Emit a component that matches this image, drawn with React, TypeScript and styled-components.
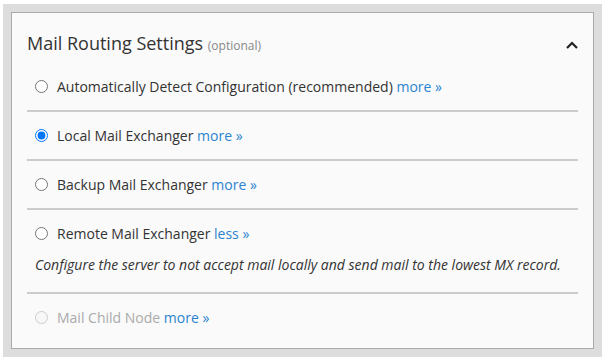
import React from 'react';
import styled, { createGlobalStyle } from 'styled-components';

const GlobalStyle = createGlobalStyle`
  html, body {
    margin: 0;
    padding: 0;
    background: #ffffff;
  }
  body {
    font-family: "Open Sans", "Liberation Sans", sans-serif;
    color: #333333;
  }
`;

type Option = {
  id: string;
  label: string;
  link: string;
  checked?: boolean;
  disabled?: boolean;
  description?: string;
};

const OPTIONS: Option[] = [
  { id: 'auto', label: 'Automatically Detect Configuration (recommended)', link: 'more »' },
  { id: 'local', label: 'Local Mail Exchanger', link: 'more »', checked: true },
  { id: 'backup', label: 'Backup Mail Exchanger', link: 'more »' },
  {
    id: 'remote',
    label: 'Remote Mail Exchanger',
    link: 'less »',
    description: 'Configure the server to not accept mail locally and send mail to the lowest MX record.',
  },
  { id: 'child', label: 'Mail Child Node', link: 'more »', disabled: true },
];

const App = () => (
  <>
    <GlobalStyle />
    <Frame>
      <Panel>
        <Header>
          <Title>
            Mail Routing Settings <Optional>(optional)</Optional>
          </Title>
          <Chevron width="12" height="8" viewBox="0 0 12 8">
            <polyline points="1,7 6,2 11,7" fill="none" stroke="#222" strokeWidth="2.2" />
          </Chevron>
        </Header>
        <List>
          {OPTIONS.map(o => (
            <Row key={o.id}>
              <Label disabled={o.disabled}>
                <Radio type="radio" name="routing" defaultChecked={o.checked} disabled={o.disabled} />
                <span>
                  {o.label} <MoreLink href="#">{o.link}</MoreLink>
                </span>
              </Label>
              {o.description && <Description>{o.description}</Description>}
            </Row>
          ))}
        </List>
      </Panel>
    </Frame>
  </>
);

export default App;

const Frame = styled.div`
  margin: 4px 2px 0 3px;
  width: 583px;
  padding: 8px;
  background: #dddddd;
`;

const Panel = styled.div`
  border: 1px solid #aaaaaa;
  background: #fafafa;
  padding: 0 15px 7px;
`;

const Header = styled.div`
  display: flex;
  align-items: center;
  justify-content: space-between;
  padding: 18px 0 5px;
`;

const Title = styled.h2`
  margin: 0;
  font-size: 18px;
  line-height: 24px;
  font-weight: 400;
  color: #333333;
`;

const Optional = styled.span`
  font-size: 12px;
  color: #888888;
`;

const Chevron = styled.svg`
  display: block;
`;

const List = styled.div`
  display: flex;
  flex-direction: column;
`;

const Row = styled.div`
  padding: 13px 8px;
  border-bottom: 2px solid #cccccc;
  &:last-child {
    border-bottom: none;
  }
`;

const Label = styled.label<{ disabled?: boolean }>`
  display: flex;
  align-items: center;
  font-size: 14px;
  line-height: 21px;
  color: ${p => (p.disabled ? '#aaaaaa' : '#333333')};
`;

const Radio = styled.input`
  width: 13px;
  height: 13px;
  margin: 0 9px 0 0;
  flex-shrink: 0;
`;

const MoreLink = styled.a`
  color: #2a83d0;
  text-decoration: none;
`;

const Description = styled.p`
  margin: 10px 0 4px;
  font-size: 14px;
  line-height: 21px;
  font-style: italic;
  color: #333333;
`;
